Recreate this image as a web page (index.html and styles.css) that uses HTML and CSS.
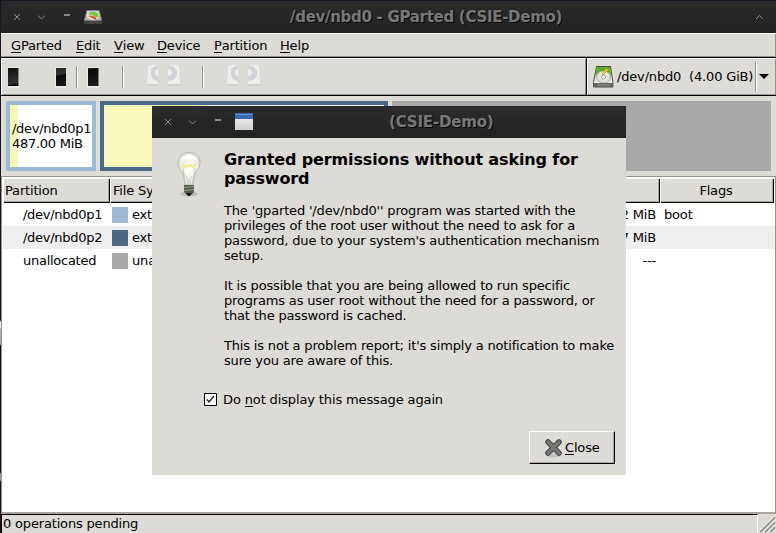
FILE: index.html
```
<!DOCTYPE html>
<html lang="en">
<head>
<meta charset="utf-8">
<title>/dev/nbd0 - GParted (CSIE-Demo)</title>
<link rel="stylesheet" href="styles.css">
</head>
<body>
<svg class="defs" width="0" height="0" aria-hidden="true">
  <defs>
    <linearGradient id="blk" x1="0" y1="0" x2="1" y2="1"><stop offset="0" stop-color="#101010"/><stop offset=".45" stop-color="#333"/><stop offset=".5" stop-color="#0b0b0b"/><stop offset="1" stop-color="#1c1c1c"/></linearGradient>
    <linearGradient id="metal" x1="0" y1="0" x2="0" y2="1"><stop offset="0" stop-color="#eee"/><stop offset="1" stop-color="#999"/></linearGradient>
    <linearGradient id="win" x1="0" y1="0" x2="0" y2="1"><stop offset="0" stop-color="#f4f4f4"/><stop offset="1" stop-color="#cfcfcf"/></linearGradient>
    <radialGradient id="glass"><stop offset="0" stop-color="#fffff0"/><stop offset=".65" stop-color="#f1f1ed"/><stop offset="1" stop-color="#e3e3df"/></radialGradient>
  </defs>
</svg>
<div class="window">
  <header class="titlebar">
    <svg class="controls" width="110" height="32" viewBox="0 0 110 32" fill="none" stroke="#8a8a8a">
      <path d="M14 13l6 6M20 13l-6 6M38 14.500l3.500 3.500 3.500-3.500"/><path d="M64 14h6" stroke-width="2"/>
      <path d="M87 9.500h12l2.500 9v3.500h-17v-3.500z" fill="url(#metal)" stroke="#777"/><path d="M84 19.500h18v3.500H84z" fill="#444" stroke="none"/>
      <ellipse cx="93" cy="14.500" rx="6.500" ry="4.500" fill="#eee" stroke="#bbb"/><path d="M88.500 14q0-3 4.500-3.500 5 .5 6 5l-4 1-3-3z" fill="#79c43d" stroke="none"/><path d="M87.500 15l3-1 2 4z" fill="#f49a32" stroke="none"/><path d="M91 15l5 3" stroke="#d33" stroke-width="1.500"/>
    </svg>
    <h1 class="main-title">/dev/nbd0 - GParted (CSIE-Demo)</h1>
    <svg class="shade" width="18" height="32" fill="none" stroke="#8a8a8a"><path d="M2 18l3.500-3.500L9 18"/></svg>
  </header>
  <nav class="menubar">
    <span class="m1"><u>G</u>Parted</span><span class="m2"><u>E</u>dit</span><span class="m3"><u>V</u>iew</span><span class="m4"><u>D</u>evice</span><span class="m5"><u>P</u>artition</span><span class="m6"><u>H</u>elp</span>
  </nav>
  <div class="tools">
    <svg class="toolbar" width="585" height="37" viewBox="1 58 585 37">
      <g fill="#e9e9ea"><path d="M8 67h11v21H8zM55 67h11v21H55zM87 67h12v21H87z"/></g>
      <g fill="url(#blk)"><path d="M8 68h10.500v18H8zM56 68h10v18H56zM88 68h10.500v18H88z"/></g>
      <path d="M76.500 66v22M122.500 66v22M202.500 66v22" stroke="#96938b"/><path d="M77.500 66v22M123.500 66v22M203.500 66v22" stroke="#fff"/>
      <g id="disc"><path d="M148 65h10v20h-11zM168 65h11l1 20h-12z" fill="#eeeeef"/><path d="M147 84h11v2h-11zM168 84h12v2h-12z" fill="#d0d0cf"/><path d="M158 65q-7 1-7 8t7 8v-5q-3-1-3-3.500t3-3.500zM168 65q9 1 9 8t-9 8v-5q4-1 4-3.500t-4-3.500z" fill="#d1d1d6"/></g>
      <use href="#disc" x="80"/>
    </svg>
    <div class="device">
      <svg width="23" height="24" viewBox="0 0 23 24"><path d="M4.500 1.500h14l2.500 16v4.500H1.500v-4.500z" fill="#e8e8e5" stroke="#4b4e4b"/><path d="M4.500 2h13.500l1 9H3.500z" fill="#5cad28"/><ellipse cx="11.500" cy="12" rx="7" ry="6" fill="#e4e4e0" stroke="#aaa"/><circle cx="11.500" cy="12" r="2" fill="#fff" stroke="#aaa"/><path d="M17 4l-6 6-1-1 4-5z" fill="#f2d232" stroke="#c29a10" stroke-width=".7"/><path d="M2 18h19v4H2z" fill="#626662"/><path d="M5 20h13" stroke="#929692"/></svg>
      <span class="device-name">/dev/nbd0&nbsp; (4.00 GiB)</span>
      <i class="combo-line"></i><i class="arrow"></i>
    </div>
  </div>
  <section class="disk">
    <div class="part p1"><i></i><span>/dev/nbd0p1<br>487.00 MiB</span></div>
    <div class="part p2"><i></i></div>
    <div class="free"></div>
  </section>
  <section class="table">
    <div class="row head"><span class="c1">Partition</span><span class="c2">File System</span><span class="c3"></span><span class="c4">Flags</span></div>
    <div class="row"><span class="c1">/dev/nbd0p1</span><span class="c2"><i class="sw light"></i>ext4</span><span class="c3">2 MiB</span><span class="c4">boot</span></div>
    <div class="row alt"><span class="c1">/dev/nbd0p2</span><span class="c2"><i class="sw dark"></i>ext4</span><span class="c3">7 MiB</span><span class="c4"></span></div>
    <div class="row"><span class="c1 un">unallocated</span><span class="c2"><i class="sw gray"></i>unallocated</span><span class="c3">---</span><span class="c4"></span></div>
  </section>
  <footer class="status"><span class="status-text">0 operations pending</span>
    <svg width="18" height="19" viewBox="0 0 18 19"><path d="M2 18L17 3M7 18L17 8M12 18l5-5" stroke="#918e86" stroke-width="2"/><path d="M0.500 18L17 1.500M5.500 18L17 6.500M10.500 18l6.500-6.500" stroke="#fff"/></svg>
  </footer>
</div>

<section class="dialog">
  <header class="dialog-bar">
    <svg class="controls" width="110" height="32" viewBox="0 0 110 32" fill="none" stroke="#8a8a8a"><path d="M13 13l6 6M19 13l-6 6M37 14.500l3.500 3.500 3.500-3.500"/><path d="M63 14h6" stroke-width="2"/><path d="M83 7h18v17H83z" fill="url(#win)" stroke="none"/><path d="M83 7h18v6H83z" fill="#3868b0" stroke="none"/><path d="M84 8.500h16" stroke="#6796d3"/></svg>
    <h2 class="dialog-name">(CSIE-Demo)</h2>
  </header>
  <div class="dialog-body">
    <svg class="bulb" width="32" height="48" viewBox="0 0 32 48">
      <ellipse cx="16" cy="43" rx="9" ry="2.500" fill="#aaa9a4" opacity=".65"/>
      <path d="M16 1.500C9.500 1.500 5 5.500 5 12c0 5 4 8 5.500 13 1 4 1.500 6 1.500 9h8c0-3 .5-5 1.500-9C23 20 27 17 27 12 27 5.500 22.500 1.500 16 1.500z" fill="url(#glass)" stroke="#b6b6b2"/>
      <path d="M8 10Q9 4 16 4q7 0 8 6-8-4-16 0z" fill="#fff"/>
      <path d="M12 33c0-8-2-11-2-16M20 33c0-8 2-11 2-16M15 34v-6l-2-3M17 34v-6l2-3" fill="none" stroke="#c1c1bd"/>
      <path d="M10 13q0 3 2 2.500 4-2 8 0 2 .5 2-2.500" fill="none" stroke="#f5ec8e" stroke-width="2"/>
      <path d="M11 34h10v7l-3 3h-4l-3-3z" fill="#535c4b"/><path d="M11 36.500l10-1M11 39.500l10-1" stroke="#9ba391"/><path d="M13 42h6l-2 3h-2z" fill="#171b18"/>
    </svg>
    <div class="message">
      <h3>Granted permissions without asking for<br>password</h3>
      <p>The 'gparted '/dev/nbd0'' program was started with the<br>privileges of the root user without the need to ask for a<br>password, due to your system's authentication mechanism<br>setup.</p>
      <p>It is possible that you are being allowed to run specific<br>programs as user root without the need for a password, or<br>that the password is cached.</p>
      <p>This is not a problem report; it's simply a notification to make<br>sure you are aware of this.</p>
    </div>
  </div>
  <label class="check"><svg width="13" height="13" viewBox="0 0 13 13"><path d="M.5.5h12v12H.5z" fill="#fff" stroke="#000"/><path d="M3 6.500l2 2.500 5-6" fill="none" stroke="#222" stroke-width="1.400"/></svg><span class="check-text">Do <u>n</u>ot display this message again</span></label>
  <button class="close"><svg width="20" height="20" viewBox="0 0 20 20"><ellipse cx="10" cy="17.500" rx="7" ry="2" fill="#c2c1bc"/><path d="M4 4l11 11M15 4L4 15" stroke="#424745" stroke-width="5.500" stroke-linecap="round"/><path d="M4 4l11 11M15 4L4 15" stroke="#747977" stroke-width="3.500" stroke-linecap="round"/></svg><span><u>C</u>lose</span></button>
</section>
</body>
</html>
```

FILE: styles.css
```
* { box-sizing: border-box; }
body { margin: 0; width: 776px; height: 533px; overflow: hidden; position: relative; background: linear-gradient(#191522 0 320px, #e8e8e8 322px 328px, #aaa 329px 344px, #1c0c0a 346px 450px, #111 452px 472px, #999 474px 480px, #24100c 482px); color: #000; font: 13px/15px "DejaVu Sans", sans-serif; letter-spacing: -.17px; }
svg { display: block; flex: none; }
.defs { position: absolute; }
h1, h2, h3, p { margin: 0; }
u { text-decoration: none; border-bottom: 1px solid #000; display: inline-block; height: 15px; }
.window { margin-left: 1px; padding-top: 1px; height: 533px; display: flex; flex-direction: column; background: #dcdbd6; background-clip: content-box; }
.titlebar, .dialog-bar { height: 32px; flex: none; display: flex; background: linear-gradient(#2b2b2b, #222); color: #777; text-shadow: 1px 1px #080808; }
.titlebar h1, .dialog-bar h2 { font-size: 15px; line-height: 32px; font-weight: bold; white-space: nowrap; }
.titlebar .controls { margin-left: -1px; }
.titlebar .main-title { margin-left: 180px; width: 464px; letter-spacing: -.29px; }
.menubar { height: 25px; flex: none; display: flex; padding: 4px 0 0 10px; border-top: 1px solid #fff; border-bottom: 1px solid #000; box-shadow: inset 0 -1px #96938b, inset -1px 0 #96938b; }
.menubar span { white-space: nowrap; }
.m1 { width: 65px; } .m2 { width: 38px; } .m3 { width: 43px; } .m4 { width: 57px; } .m5 { width: 66px; }
.tools { height: 38px; flex: none; display: flex; border-bottom: 1px solid #000; }
.toolbar { box-shadow: inset 0 1px #fff, inset 1px 0 #fff, inset -1px -1px #96938b; }
.device { width: 190px; border-left: 1px solid #000; display: flex; align-items: center; padding-left: 5px; box-shadow: inset 1px 1px #fff, inset -1px -1px #96938b; }
.device-name { width: 138px; margin-left: 2px; white-space: nowrap; }
.combo-line { width: 2px; height: 30px; border-left: 1px solid #96938b; border-right: 1px solid #fff; }
.arrow { margin-left: 2px; border: 5px solid transparent; border-top: 5px solid #000; border-bottom: 0; }
.disk { height: 80px; flex: none; display: flex; padding: 5px 0 0 5px; gap: 4px; }
.part { height: 70px; border: 4px solid #9eb9d5; background: #fff; display: flex; }
.p1 { width: 90px; align-items: center; }
.p1 i { width: 8px; height: 62px; background: #f8f8ba; flex: none; }
.p1 span { margin-left: -6px; white-space: nowrap; letter-spacing: -.27px; }
.p2 { width: 288px; border-color: #4c6983; }
.p2 i { width: 102px; background: #f8f8ba; }
.free { width: 379px; height: 70px; background: #a9a9a9; }
.table { height: 338px; flex: none; background: #fff; border: 1px solid #96938b; border-width: 1px 1px 2px; border-bottom-color: #aaa69d; }
.row { height: 23px; display: flex; line-height: 23px; margin-left: 1px; white-space: nowrap; }
.head { height: 26px; padding-top: 1px; line-height: 26px; }
.head span { background: #dcdbd6; box-shadow: inset 1px 1px #fff, inset -1px -1px #000, inset -2px -2px #aaa69d; }
.row .c1 { width: 107px; padding-left: 20px; letter-spacing: -.27px; }
.head .c1.c1 { padding-left: 2px; letter-spacing: -.17px; }
.c2 { width: 150px; padding-left: 2px; display: flex; align-items: center; }
.head .c2 { padding-left: 3px; }
.sw { width: 16px; height: 16px; margin-right: 4px; }
.light { background: #9eb9d5; } .dark { background: #4c6983; } .gray { background: #a9a9a9; }
.c3 { width: 400px; text-align: right; padding-right: 4px; }
.c4 { width: 114px; padding-left: 4px; }
.head .c4 { text-align: center; padding: 0 2px 0 0; }
.alt { background: #eee; }
.status { height: 19px; flex: none; display: flex; }
.status-text { width: 757px; border-left: 1px solid #000; border-top: 1px solid #000; border-right: 1px solid #fff; padding-left: 1px; padding-top: 1px; }
.dialog { position: absolute; left: 152px; top: 106px; width: 474px; height: 369px; background: #dcdbd6; display: flex; flex-direction: column; }
.dialog-name { margin-left: 127px; }
.dialog-body { height: 248px; display: flex; flex: none; }
.bulb { margin: 13px 0 0 21px; }
.message { margin: 12px 0 0 19px; white-space: nowrap; }
h3 { font-size: 16px; line-height: 19px; margin-bottom: 15px; letter-spacing: -.13px; }
.message p { margin-bottom: 15px; }
.check { height: 26px; margin-left: 52px; display: flex; align-items: center; gap: 6px; white-space: nowrap; letter-spacing: -.13px; }
.close { width: 86px; height: 33px; flex: none; margin: 19px 11px 0 auto; padding: 0 0 0 14px; border: 1px solid #000; border-top-color: #fff; border-left-color: #fff; box-shadow: inset -1px -1px #aaa69d; background: #dcdbd6; color: #000; display: flex; align-items: center; gap: 1px; font: inherit; letter-spacing: -.17px; }
```
